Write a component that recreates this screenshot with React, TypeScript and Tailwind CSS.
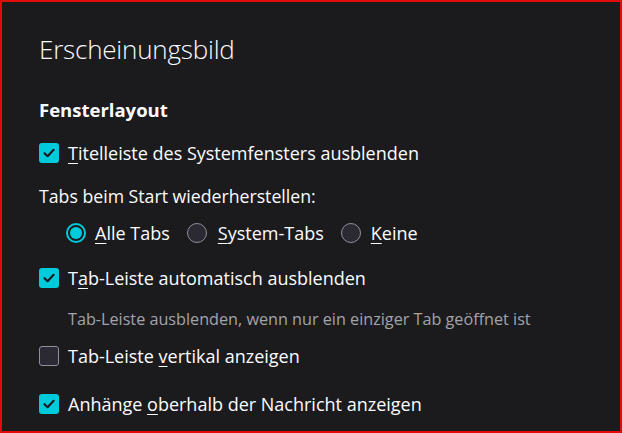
import { ReactNode } from "react";

function Key({ children }: { children: ReactNode }) {
  return <span className="underline decoration-1 underline-offset-[3px]">{children}</span>;
}

function Checkbox({ checked }: { checked: boolean }) {
  return checked ? (
    <span className="flex h-5 w-5 shrink-0 items-center justify-center rounded-[3px] bg-[#00cbdb]">
      <svg width="14" height="14" viewBox="0 0 14 14" fill="none">
        <path d="M2.5 7.2 5.6 10.2 11.6 3.8" stroke="#1c1b22" strokeWidth="2.2" strokeLinecap="round" strokeLinejoin="round" />
      </svg>
    </span>
  ) : (
    <span className="h-5 w-5 shrink-0 rounded-[3px] border border-[#8f8f9d] bg-[#2b2a33]" />
  );
}

function Radio({ checked }: { checked: boolean }) {
  return checked ? (
    <span className="flex h-5 w-5 shrink-0 items-center justify-center rounded-full border-2 border-[#00cbdb]">
      <span className="h-3 w-3 rounded-full bg-[#00cbdb] ring-1 ring-[#1c1b22]" />
    </span>
  ) : (
    <span className="h-5 w-5 shrink-0 rounded-full border border-[#8f8f9d] bg-[#2b2a33]" />
  );
}

export default function App() {
  return (
    <div
      className="h-[433px] w-[622px] border-2 border-[#e30a0a] bg-[#1b1b1e] text-[#fbfbfe]"
      style={{ fontFamily: '"Open Sans", "Noto Sans", sans-serif' }}
    >
      <div className="flex flex-col pl-[37px] pt-[25px]">
        <h1 className="h-[44px] text-[26px] font-light leading-[44px] tracking-[-0.2px]">Erscheinungsbild</h1>
        <h2 className="mt-[25px] h-[28px] text-[18.5px] font-bold leading-[28px]">Fensterlayout</h2>

        <label className="mt-[19px] flex h-[20px] items-center gap-[9px] text-[18px]">
          <Checkbox checked />
          <span>
            <Key>T</Key>itelleiste des Systemfensters ausblenden
          </span>
        </label>

        <div className="mt-[22px] h-[22px] text-[17.7px] leading-[22px]">Tabs beim Start wiederherstellen:</div>

        <div className="mt-[16px] flex h-[20px] items-center pl-[27px] text-[18px]">
          <label className="flex items-center gap-[9px]">
            <Radio checked />
            <span>
              <Key>A</Key>lle Tabs
            </span>
          </label>
          <label className="ml-[17px] flex items-center gap-[11px]">
            <Radio checked={false} />
            <span>
              <Key>S</Key>ystem-Tabs
            </span>
          </label>
          <label className="ml-[17px] flex items-center gap-[10px]">
            <Radio checked={false} />
            <span>
              <Key>K</Key>eine
            </span>
          </label>
        </div>

        <label className="mt-[25px] flex h-[20px] items-center gap-[9px] text-[18px]">
          <Checkbox checked />
          <span>
            T<Key>a</Key>b-Leiste automatisch ausblenden
          </span>
        </label>

        <div className="mt-[20px] h-[22px] pl-[29px] text-[16.2px] leading-[22px] text-[#a3a3ab]">
          Tab-Leiste ausblenden, wenn nur ein einziger Tab geöffnet ist
        </div>

        <label className="mt-[16px] flex h-[20px] items-center gap-[9px] text-[18px]">
          <Checkbox checked={false} />
          <span>
            Tab-Leiste <Key>v</Key>ertikal anzeigen
          </span>
        </label>

        <label className="mt-[28px] flex h-[20px] items-center gap-[9px] text-[18px]">
          <Checkbox checked />
          <span>
            Anhänge <Key>o</Key>berhalb der Nachricht anzeigen
          </span>
        </label>
      </div>
    </div>
  );
}
